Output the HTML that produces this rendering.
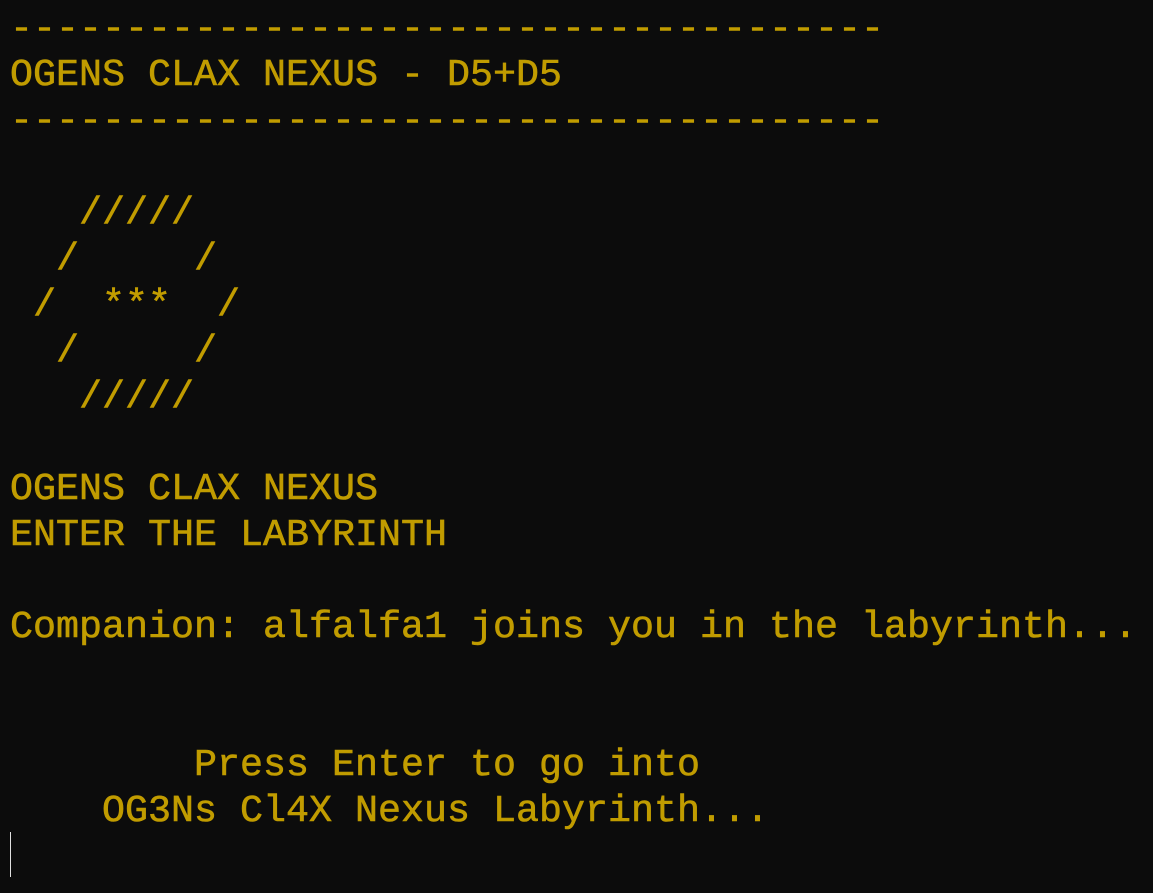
<!DOCTYPE html>
<html><head><meta charset="utf-8"><style>
html,body{margin:0;padding:0;background:#0c0c0c;width:1153px;height:893px;overflow:hidden}
pre{margin:0;position:absolute;left:10px;top:6px;font-family:"Liberation Mono","DejaVu Sans Mono",monospace;font-size:38.33px;line-height:46px;color:#c19c00;font-weight:normal;-webkit-text-stroke:0.6px #c19c00}
.cur{position:absolute;left:10px;top:832px;width:1px;height:45px;background:#e0e0e0}
</style></head><body>
<pre>--------------------------------------
OGENS CLAX NEXUS - D5+D5
--------------------------------------

   /////
  /     /
 /  ***  /
  /     /
   /////

OGENS CLAX NEXUS
ENTER THE LABYRINTH

Companion: alfalfa1 joins you in the labyrinth...


        Press Enter to go into
    OG3Ns Cl4X Nexus Labyrinth...</pre>
<div class="cur"></div>
</body></html>
